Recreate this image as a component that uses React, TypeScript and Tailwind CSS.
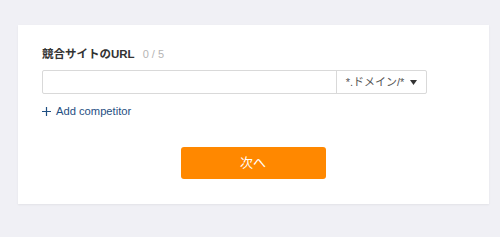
import React from 'react';

export default function App() {
  return (
    <div
      className="w-[500px] h-[237px] bg-[#f0f0f5] pt-[25px] pl-[18px]"
      style={{ fontFamily: '"Liberation Sans", Arial, "Noto Sans CJK JP", sans-serif' }}
    >
      <div className="w-[471px] h-[179px] bg-white shadow-[0_1px_2px_rgba(0,0,0,0.06)] pt-[21px] px-[24px]">
        <div className="flex items-baseline gap-[8px] h-[16px] leading-[16px]">
          <span className="text-[11.5px] font-bold text-[#333]">競合サイトのURL</span>
          <span className="text-[11px] text-[#b5b5b5]">0 / 5</span>
        </div>
        <div className="mt-[8px] flex w-[385px] h-[24px] border border-[#d9d9d9] rounded-[2px]">
          <input className="flex-1 min-w-0 outline-none px-2 text-[12px]" />
          <div className="w-[90px] border-l border-[#d9d9d9] flex items-center justify-center gap-[6px] text-[11px] text-[#555]">
            <span>*.ドメイン/*</span>
            <svg width="7" height="5" viewBox="0 0 7 5">
              <path d="M0 0 H7 L3.5 5 Z" fill="#333" />
            </svg>
          </div>
        </div>
        <div className="mt-[9px] flex items-center gap-[5px] text-[11.2px] text-[#1f4f82] h-[16px]">
          <svg width="9" height="9" viewBox="0 0 9 9">
            <path d="M4.5 0 V9 M0 4.5 H9" stroke="#1f4f82" strokeWidth="1.2" />
          </svg>
          <span>Add competitor</span>
        </div>
        <div className="flex justify-center mt-[28px] pr-[1px]">
          <button className="w-[145px] h-[32px] bg-[#ff8800] rounded-[3px] text-white text-[13px]">
            次へ
          </button>
        </div>
      </div>
    </div>
  );
}
